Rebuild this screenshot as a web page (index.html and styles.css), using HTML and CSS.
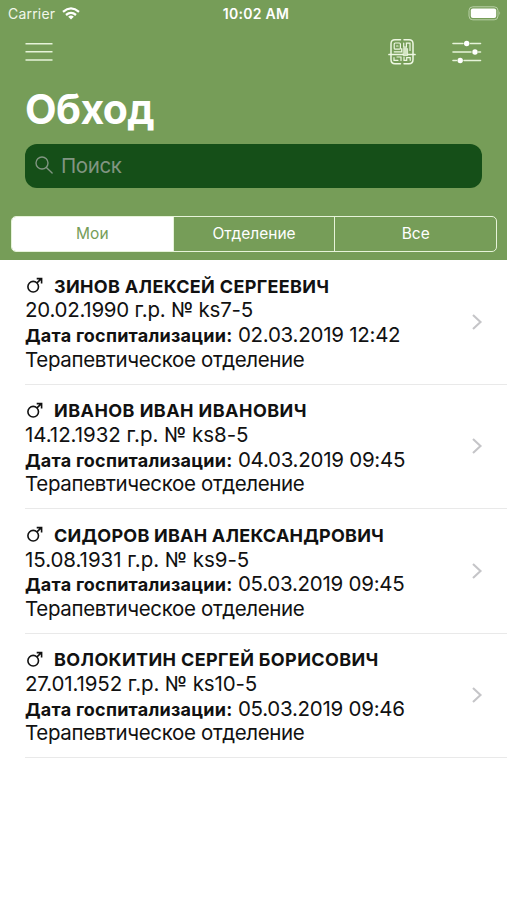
FILE: index.html
```html
<!DOCTYPE html>
<html lang="ru">
<head>
<meta charset="utf-8">
<title>Обход</title>
<link rel="stylesheet" href="styles.css">
</head>
<body>
<header class="header">
  <div class="status">
    <div class="carrier"><span>Carrier</span>
      <svg class="wifi" viewBox="0 0 18 13" width="18" height="13"><g fill="none" stroke="#fff" stroke-width="2.3"><path d="M1 4.8Q9-2 17 4.8"/><path d="M4 8Q9 3.8 14 8"/></g><path d="M6.2 9.7Q9 7.5 11.8 9.7L9 12.6Z" fill="#fff"/></svg>
    </div>
    <div class="time">10:02 AM</div>
    <svg class="battery" viewBox="0 0 34 15" width="34" height="15"><rect x="1" y=".8" width="29" height="13" rx="3.8" fill="none" stroke="#b9d0a7" stroke-width="1"/><rect x="2.8" y="2.6" width="25.4" height="9.4" rx="2" fill="#fff"/><path d="M31.4 5.3Q33.2 7.3 31.4 9.3Z" fill="#b9d0a7"/></svg>
  </div>
  <div class="toolbar">
    <svg class="menu" viewBox="0 0 28 20" width="28" height="20"><path d="M.5 1.7h27M.5 9.8h27M.5 17.9h27" stroke="#e6f3d9" stroke-width="1.5"/></svg>
    <svg class="scan" viewBox="0 0 28 28" width="28" height="28" fill="none" stroke="#edf7e2" stroke-width="1.5" stroke-linecap="round"><path d="M12.5 1.7H7Q3 1.7 3 5.7V21.5Q3 25.7 7 25.7H12.5M16 1.7H21Q25 1.7 25 5.7V21.5Q25 25.7 21 25.7H16"/><path d="M1 16.5H27" stroke-width="1.7"/><g stroke-width="1.2"><rect x="6.2" y="5" width="6.2" height="6.2" rx="1"/><path d="M8.6 8h1.4M15.7 5v4.2h2.7V5.2H22v7.2M6.2 13.8h7.5V10.5M6 19.5V22.3h4M9 19h4v3.5M16 19v3.3h2.7V19.7h3.5v2.6"/></g><path d="M15.6 10.6h4v7h-4z" fill="#d5e6c4" stroke-width=".8"/></svg>
    <svg class="filters" viewBox="0 0 30 24" width="30" height="24"><path d="M1 3.5h10M18.5 3.5h10M1 12h18M26.5 12h2M1 20.5h3.5M12 20.5h16.5" stroke="#e6f3d9" stroke-width="1.6" stroke-linecap="round"/><g fill="#fff"><circle cx="14.7" cy="3.5" r="2.7"/><circle cx="23" cy="12" r="2.7"/><circle cx="8.2" cy="20.5" r="2.7"/></g></svg>
  </div>
  <h1 class="title">Обход</h1>
  <div class="search">
    <svg viewBox="0 0 18 18" width="18" height="18" fill="none" stroke="#819582" stroke-width="1.4" stroke-linecap="round"><circle cx="7" cy="7" r="6"/><path d="M11.4 11.4l5.7 5.5"/></svg>
    <span>Поиск</span>
  </div>
  <div class="tabs"><div class="tab active">Мои</div><div class="tab">Отделение</div><div class="tab">Все</div></div>
</header>
<main class="list">
  <article class="row">
    <div class="name"><svg class="male" viewBox="0 0 18 18" width="18" height="18"><circle cx="8.2" cy="9.7" r="5.3"/><path d="M12 5.9L16.3 1.6M11.7 1.6H16.6V6.5"/></svg><b class="n1">ЗИНОВ АЛЕКСЕЙ СЕРГЕЕВИЧ</b></div>
    <div class="line born b1">20.02.1990 г.р. № ks7-5</div>
    <div class="line"><b>Дата госпитализации:</b> 02.03.2019 12:42</div>
    <div class="line dept">Терапевтическое отделение</div>
    <svg class="chevron" viewBox="0 0 12 18" width="12" height="18"><path d="M2 2l7.5 7L2 16"/></svg>
  </article>
  <article class="row">
    <div class="name"><svg class="male" viewBox="0 0 18 18" width="18" height="18"><circle cx="8.2" cy="9.7" r="5.3"/><path d="M12 5.9L16.3 1.6M11.7 1.6H16.6V6.5"/></svg><b class="n2">ИВАНОВ ИВАН ИВАНОВИЧ</b></div>
    <div class="line born">14.12.1932 г.р. № ks8-5</div>
    <div class="line"><b>Дата госпитализации:</b> 04.03.2019 09:45</div>
    <div class="line dept">Терапевтическое отделение</div>
    <svg class="chevron" viewBox="0 0 12 18" width="12" height="18"><path d="M2 2l7.5 7L2 16"/></svg>
  </article>
  <article class="row">
    <div class="name"><svg class="male" viewBox="0 0 18 18" width="18" height="18"><circle cx="8.2" cy="9.7" r="5.3"/><path d="M12 5.9L16.3 1.6M11.7 1.6H16.6V6.5"/></svg><b class="n3">СИДОРОВ ИВАН АЛЕКСАНДРОВИЧ</b></div>
    <div class="line born">15.08.1931 г.р. № ks9-5</div>
    <div class="line"><b>Дата госпитализации:</b> 05.03.2019 09:45</div>
    <div class="line dept">Терапевтическое отделение</div>
    <svg class="chevron" viewBox="0 0 12 18" width="12" height="18"><path d="M2 2l7.5 7L2 16"/></svg>
  </article>
  <article class="row">
    <div class="name"><svg class="male" viewBox="0 0 18 18" width="18" height="18"><circle cx="8.2" cy="9.7" r="5.3"/><path d="M12 5.9L16.3 1.6M11.7 1.6H16.6V6.5"/></svg><b class="n4">ВОЛОКИТИН СЕРГЕЙ БОРИСОВИЧ</b></div>
    <div class="line born b4">27.01.1952 г.р. № ks10-5</div>
    <div class="line"><b>Дата госпитализации:</b> 05.03.2019 09:46</div>
    <div class="line dept">Терапевтическое отделение</div>
    <svg class="chevron" viewBox="0 0 12 18" width="12" height="18"><path d="M2 2l7.5 7L2 16"/></svg>
  </article>
</main>
</body>
</html>
```
FILE: styles.css
```css
* { box-sizing: border-box; }
body { margin: 0; height: 900px; overflow: hidden; background: #fff; color: #111; font-family: Inter, "Liberation Sans", sans-serif; }
svg { display: block; flex: none; }
.header { height: 260px; background: #769d58; color: #fff; }
.status { display: grid; grid-template-columns: 1fr auto 1fr; align-items: center; height: 27px; padding: 0 6px 0 8px; font-size: 14px; }
.carrier { display: flex; align-items: center; gap: 7px; color: #f1f7ea; letter-spacing: .2px; }
.time { padding-left: 3px; font-weight: 600; font-size: 14px; letter-spacing: .3px; }
.battery { justify-self: end; margin-right: -1px; }
.toolbar { display: flex; align-items: center; height: 50px; padding: 0 25px; }
.scan { margin-left: auto; }
.filters { margin-left: 36px; }
.title { margin: 7px 0 0 25px; height: 50px; line-height: 50px; font-size: 41px; font-weight: 700; letter-spacing: -.6px; }
.search { display: flex; align-items: center; gap: 8px; height: 44px; margin: 10px 25px 0; padding: 0 10px 2px; border-radius: 12px; background: #154f18; color: #819582; font-size: 20.5px; letter-spacing: -.4px; }
.tabs { display: flex; height: 36px; margin: 28px 10px 0 11px; border: 1.5px solid #e6f3d9; border-radius: 5px; overflow: hidden; }
.tab { flex: 1; display: flex; align-items: center; justify-content: center; padding-bottom: 1px; font-size: 15.5px; }
.tab + .tab { border-left: 1px solid #e6f3d9; }
.active { background: #fff; color: #769d58; }
.row { position: relative; height: 124.6px; margin-left: 25px; padding-top: 14px; border-bottom: 1px solid #e9e9e9; }
.name { display: flex; align-items: center; gap: 11px; height: 24.4px; font-size: 18px; }
.name b, .line b { font-weight: 700; }
.n1 { letter-spacing: .33px; }
.n2 { letter-spacing: .44px; }
.n3 { letter-spacing: .22px; }
.n4 { letter-spacing: .37px; }
.male { fill: none; stroke: #111; stroke-width: 1.6; }
.line { height: 24.6px; line-height: 24.6px; font-size: 20.5px; letter-spacing: -.26px; white-space: nowrap; }
.line b { font-size: 18px; letter-spacing: .23px; }
.born { letter-spacing: -.05px; }
.b1 { letter-spacing: -.26px; }
.b4 { letter-spacing: -.13px; }
.dept { letter-spacing: -.35px; }
.chevron { position: absolute; right: 24px; top: 52.5px; fill: none; stroke: #c5c5c8; stroke-width: 2.1; }
```
